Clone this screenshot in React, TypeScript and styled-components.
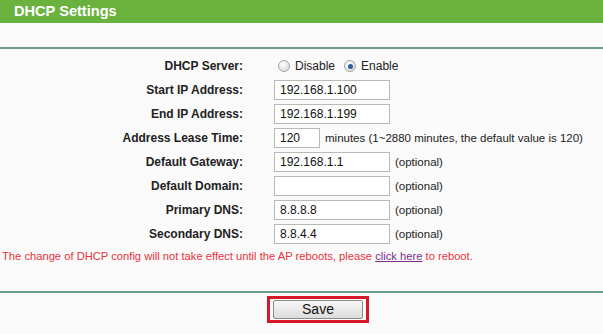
import styled, { createGlobalStyle } from 'styled-components';

const GlobalStyle = createGlobalStyle`
  body {
    margin: 0;
    background: #fafafa;
    font-family: 'Liberation Sans', Arial, sans-serif;
    font-size: 12px;
    color: #000;
  }
`;

interface Field {
  label: string;
  value?: string;
  width?: number;
  note?: string;
}

const fields: Field[] = [
  { label: 'Start IP Address:', value: '192.168.1.100' },
  { label: 'End IP Address:', value: '192.168.1.199' },
  { label: 'Address Lease Time:', value: '120', width: 46, note: 'minutes (1~2880 minutes, the default value is 120)' },
  { label: 'Default Gateway:', value: '192.168.1.1', note: '(optional)' },
  { label: 'Default Domain:', value: '', note: '(optional)' },
  { label: 'Primary DNS:', value: '8.8.8.8', note: '(optional)' },
  { label: 'Secondary DNS:', value: '8.8.4.4', note: '(optional)' },
];

const App = () => {
  return (
    <Page>
      <GlobalStyle />
      <Header>DHCP Settings</Header>
      <Divider $top={24} />
      <Form>
        <Label>DHCP Server:</Label>
        <Value>
          <Radio />
          <RadioText>Disable</RadioText>
          <Radio checked />
          <RadioText>Enable</RadioText>
        </Value>
        {fields.map((f) => (
          <Row key={f.label} field={f} />
        ))}
      </Form>
      <Warning>
        The change of DHCP config will not take effect until the AP reboots, please <Link>click here</Link> to
        reboot.
      </Warning>
      <Divider $top={27} />
      <Footer>
        <Highlight>
          <SaveButton>Save</SaveButton>
        </Highlight>
      </Footer>
    </Page>
  );
};

const Row = ({ field }: { field: Field }) => {
  return (
    <>
      <Label>{field.label}</Label>
      <Value>
        <TextBox $width={field.width ?? 116}>{field.value}</TextBox>
        {field.note && <Note>{field.note}</Note>}
      </Value>
    </>
  );
};

const Radio = ({ checked = false }: { checked?: boolean }) => {
  return <RadioCircle>{checked && <RadioDot />}</RadioCircle>;
};

const Page = styled.div`
  width: 603px;
  height: 334px;
  overflow: hidden;
`;

const Header = styled.div`
  height: 23px;
  background: #6ab23e;
  color: #fff;
  font-weight: bold;
  font-size: 14.6px;
  line-height: 22px;
  padding-left: 14px;
`;

const Divider = styled.div<{ $top: number }>`
  margin-top: ${({ $top }) => $top}px;
  height: 2px;
  background: #6e9f88;
`;

const Form = styled.div`
  display: grid;
  grid-template-columns: 243px 1fr;
  column-gap: 31px;
  grid-auto-rows: 24px;
  margin-top: 5px;
`;

const Label = styled.div`
  display: flex;
  align-items: center;
  justify-content: flex-end;
  font-weight: bold;
  color: #222;
`;

const Value = styled.div`
  display: flex;
  align-items: center;
  gap: 6px;
  font-size: 11.5px;
`;

const TextBox = styled.div<{ $width: number }>`
  box-sizing: border-box;
  width: ${({ $width }) => $width}px;
  height: 20px;
  border: 1px solid #b9b9b9;
  background: #fff;
  padding: 0 5px;
  line-height: 18px;
  font-size: 12px;
  color: #111;
`;

const Note = styled.span`
  color: #222;
  margin-left: -1px;
`;

const RadioCircle = styled.span`
  box-sizing: border-box;
  width: 12px;
  height: 12px;
  margin-left: 4px;
  border-radius: 50%;
  border: 1px solid #a5a5a5;
  background: radial-gradient(circle at 40% 35%, #fdfdfd, #d6d6d6);
  display: flex;
  align-items: center;
  justify-content: center;

  & + span {
    margin-left: -1px;
  }
`;

const RadioDot = styled.span`
  width: 5px;
  height: 5px;
  border-radius: 50%;
  background: #2b5f95;
`;

const RadioText = styled.span`
  color: #222;
  font-size: 12px;
  margin-right: -1px;
`;

const Warning = styled.div`
  margin-top: 3px;
  padding-left: 2px;
  color: #e8323c;
  font-size: 11.2px;
  line-height: 15px;
`;

const Link = styled.span`
  color: #7a2f8a;
  text-decoration: underline;
`;

const Footer = styled.div`
  display: flex;
  padding-top: 3px;
  padding-left: 267px;
`;

const Highlight = styled.div`
  border: 3px solid #d6182a;
  padding: 1px 3px;
`;

const SaveButton = styled.div`
  box-sizing: border-box;
  width: 90px;
  height: 19px;
  border: 1px solid #8a8a8a;
  border-radius: 2px;
  background: linear-gradient(#f7f7f7, #dcdcdc);
  text-align: center;
  line-height: 17px;
  font-size: 14px;
  color: #111;
`;

export default App;
